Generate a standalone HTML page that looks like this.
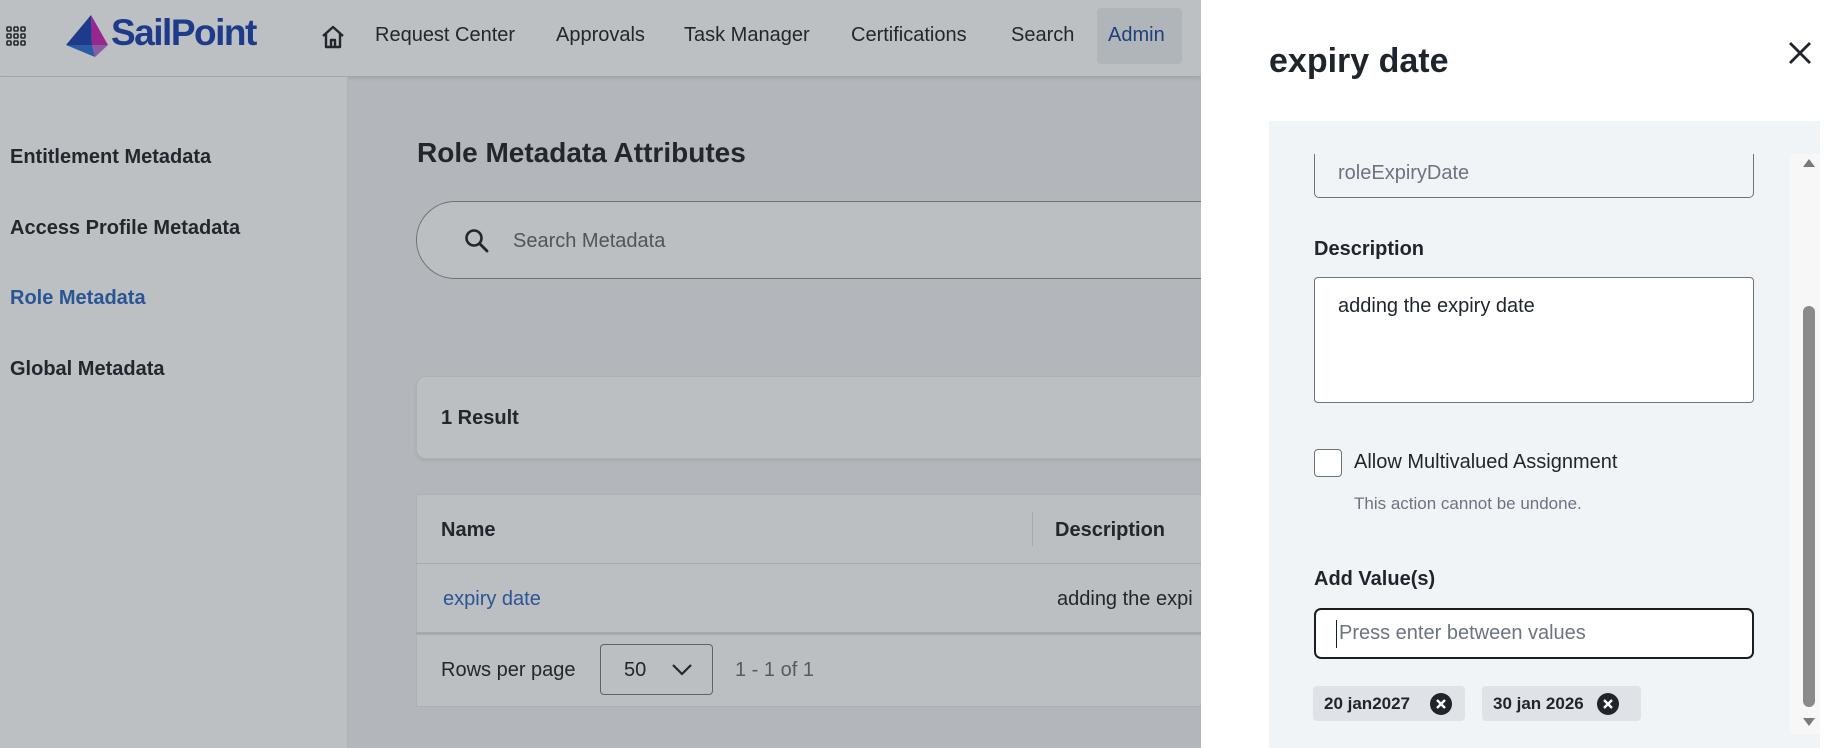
<!DOCTYPE html>
<html><head><meta charset="utf-8"><style>
*{margin:0;padding:0;box-sizing:border-box}
body{width:1835px;height:748px;overflow:hidden;position:relative;background:#b3b7bb;font-family:"Liberation Sans",sans-serif;color:#22272e}
.a{position:absolute;white-space:nowrap}
.b{font-weight:bold}
</style></head><body>
<!-- header -->
<div class="a" style="left:0;top:0;width:1201px;height:76px;background:#bcc0c3;box-shadow:0 2px 4px rgba(0,0,0,.12)"></div>
<svg class="a" style="left:5px;top:26px" width="28" height="22" viewBox="0 0 28 22">
<g fill="none" stroke="#22272e" stroke-width="1.6">
<rect x="2" y="1" width="4" height="4" rx="1"/><rect x="9" y="1" width="4" height="4" rx="1"/><rect x="16" y="1" width="4" height="4" rx="1"/>
<rect x="2" y="8" width="4" height="4" rx="1"/><rect x="9" y="8" width="4" height="4" rx="1"/><rect x="16" y="8" width="4" height="4" rx="1"/>
<rect x="2" y="15" width="4" height="4" rx="1"/><rect x="9" y="15" width="4" height="4" rx="1"/><rect x="16" y="15" width="4" height="4" rx="1"/></g></svg>
<svg class="a" style="left:66px;top:15px" width="44" height="43" viewBox="0 0 44 43">
<polygon points="25,0 0,30 26,30" fill="#1f3a8a"/><polygon points="25,0 42,30 26,30" fill="#97268f"/>
<polygon points="0,30 26,30 29,42" fill="#2b5aa6"/><polygon points="26,30 42,30 29,42" fill="#8a5aa2"/></svg>
<div class="a b" style="left:111px;top:12px;font-size:37px;color:#1e3a8a;letter-spacing:-1.5px">SailPoint</div>
<svg class="a" style="left:320px;top:24px" width="26" height="26" viewBox="0 0 26 26"><path d="M3 12 L13 3 L23 12 M6 10 V23 H20 V10 M11 23 V16 H15 V23" fill="none" stroke="#22272e" stroke-width="2.4" stroke-linejoin="round"/></svg>
<div class="a" style="left:1097px;top:8px;width:85px;height:56px;background:#b0b5ba;border-radius:4px"></div>
<div class="a" style="left:375px;top:24px;font-size:20px">Request Center</div>
<div class="a" style="left:556px;top:24px;font-size:20px">Approvals</div>
<div class="a" style="left:684px;top:24px;font-size:20px">Task Manager</div>
<div class="a" style="left:851px;top:24px;font-size:20px">Certifications</div>
<div class="a" style="left:1011px;top:24px;font-size:20px">Search</div>
<div class="a" style="left:1108px;top:24px;font-size:20px;color:#1f3e7a">Admin</div>
<!-- sidebar -->
<div class="a" style="left:0;top:77px;width:348px;height:671px;background:#bcc0c3;border-right:1px solid #aeb2b6"></div>
<div class="a b" style="left:10px;top:146px;font-size:20px">Entitlement Metadata</div>
<div class="a b" style="left:10px;top:217px;font-size:20px">Access Profile Metadata</div>
<div class="a b" style="left:10px;top:287px;font-size:20px;color:#2a5595">Role Metadata</div>
<div class="a b" style="left:10px;top:358px;font-size:20px">Global Metadata</div>
<!-- main -->
<div class="a b" style="left:417px;top:137px;font-size:28px">Role Metadata Attributes</div>
<div class="a" style="left:416px;top:201px;width:860px;height:78px;border:1.5px solid #6c7279;border-radius:39px;background:#bbbfc2"></div>
<svg class="a" style="left:464px;top:228px" width="26" height="26" viewBox="0 0 26 26"><circle cx="10" cy="10" r="7.5" fill="none" stroke="#22272e" stroke-width="2.6"/><path d="M16 16 L23 23" stroke="#22272e" stroke-width="2.8" stroke-linecap="round"/></svg>
<div class="a" style="left:513px;top:230px;font-size:20px;color:#4f555c">Search Metadata</div>
<div class="a" style="left:416px;top:376px;width:860px;height:83px;background:#bbbfc2;border:1px solid #adb1b5;border-radius:10px;box-shadow:0 2px 3px rgba(0,0,0,.08)"></div>
<div class="a b" style="left:441px;top:407px;font-size:20px">1 Result</div>
<div class="a" style="left:416px;top:494px;width:860px;height:213px;background:#bbbfc2;border:1px solid #adb1b5"></div>
<div class="a" style="left:416px;top:563px;width:860px;height:1px;background:#a6aaae"></div>
<div class="a" style="left:416px;top:632px;width:860px;height:3px;background:#a6aaae"></div>
<div class="a" style="left:1032px;top:512px;width:1px;height:34px;background:#a6aaae"></div>
<div class="a b" style="left:441px;top:519px;font-size:20px">Name</div>
<div class="a b" style="left:1055px;top:519px;font-size:20px">Description</div>
<div class="a" style="left:443px;top:588px;font-size:20px;color:#2a5595">expiry date</div>
<div class="a" style="left:1057px;top:588px;font-size:20px">adding the expi</div>
<div class="a" style="left:441px;top:659px;font-size:20px">Rows per page</div>
<div class="a" style="left:600px;top:644px;width:113px;height:51px;border:1.5px solid #5d636a;border-radius:4px"></div>
<div class="a" style="left:624px;top:659px;font-size:20px">50</div>
<svg class="a" style="left:670px;top:662px" width="24" height="16" viewBox="0 0 24 16"><path d="M3 3 L12 12 L21 3" fill="none" stroke="#22272e" stroke-width="2.2"/></svg>
<div class="a" style="left:735px;top:659px;font-size:20px;color:#555b62">1 - 1 of 1</div>
<!-- panel -->
<div class="a" style="left:1201px;top:0;width:634px;height:748px;background:#fff"></div>
<div class="a b" style="left:1269px;top:42px;font-size:34px;color:#1f252c">expiry date</div>
<svg class="a" style="left:1787px;top:40px" width="26" height="26" viewBox="0 0 26 26"><path d="M3 3 L23 23 M23 3 L3 23" stroke="#1f252c" stroke-width="2.8"/></svg>
<div class="a" style="left:1269px;top:121px;width:551px;height:627px;background:#f1f4f7"></div>
<div class="a" style="left:1790px;top:154px;width:30px;height:580px;background:#f7f7f7"></div>
<div class="a" style="left:1803px;top:306px;width:12px;height:401px;background:#8a8a8a;border-radius:6px"></div>
<svg class="a" style="left:1799px;top:157px" width="20" height="12"><polygon points="10,2 16,10 4,10" fill="#7a7a7a"/></svg>
<svg class="a" style="left:1799px;top:716px" width="20" height="12"><polygon points="4,2 16,2 10,10" fill="#7a7a7a"/></svg>
<div class="a" style="left:1314px;top:140px;width:440px;height:58px;border:1px solid #6b737c;border-top:none;border-radius:0 0 5px 5px;background:#f1f4f7"></div>
<div class="a" style="left:1269px;top:121px;width:520px;height:33px;background:#f1f4f7"></div>
<div class="a" style="left:1338px;top:162px;font-size:20px;color:#6b7480">roleExpiryDate</div>
<div class="a b" style="left:1314px;top:238px;font-size:20px;color:#1f252c">Description</div>
<div class="a" style="left:1314px;top:277px;width:440px;height:126px;border:1px solid #6b737c;border-radius:4px;background:#fff"></div>
<div class="a" style="left:1338px;top:295px;font-size:20px;color:#1f252c">adding the expiry date</div>
<div class="a" style="left:1314px;top:449px;width:28px;height:28px;border:1px solid #6b737c;border-radius:4px;background:#fff"></div>
<div class="a" style="left:1354px;top:451px;font-size:20px;color:#1f252c">Allow Multivalued Assignment</div>
<div class="a" style="left:1354px;top:494px;font-size:17px;color:#6b7480">This action cannot be undone.</div>
<div class="a b" style="left:1314px;top:568px;font-size:20px;color:#1f252c">Add Value(s)</div>
<div class="a" style="left:1314px;top:608px;width:440px;height:51px;border:2.5px solid #1a1e23;border-radius:7px;background:#fff"></div>
<div class="a" style="left:1336px;top:620px;width:1px;height:28px;background:#1a1e23"></div>
<div class="a" style="left:1339px;top:622px;font-size:20px;color:#6b7480">Press enter between values</div>
<div class="a" style="left:1313px;top:686px;width:152px;height:35px;background:#dfe2e6;border-radius:4px"></div>
<div class="a b" style="left:1324px;top:694px;font-size:17px;color:#1f252c">20 jan2027</div>
<svg class="a" style="left:1429px;top:692px" width="24" height="24"><circle cx="12" cy="12" r="11" fill="#1f252c"/><path d="M8 8 L16 16 M16 8 L8 16" stroke="#fff" stroke-width="2.4"/></svg>
<div class="a" style="left:1482px;top:686px;width:159px;height:35px;background:#dfe2e6;border-radius:4px"></div>
<div class="a b" style="left:1493px;top:694px;font-size:17px;color:#1f252c">30 jan 2026</div>
<svg class="a" style="left:1596px;top:692px" width="24" height="24"><circle cx="12" cy="12" r="11" fill="#1f252c"/><path d="M8 8 L16 16 M16 8 L8 16" stroke="#fff" stroke-width="2.4"/></svg>
</body></html>
